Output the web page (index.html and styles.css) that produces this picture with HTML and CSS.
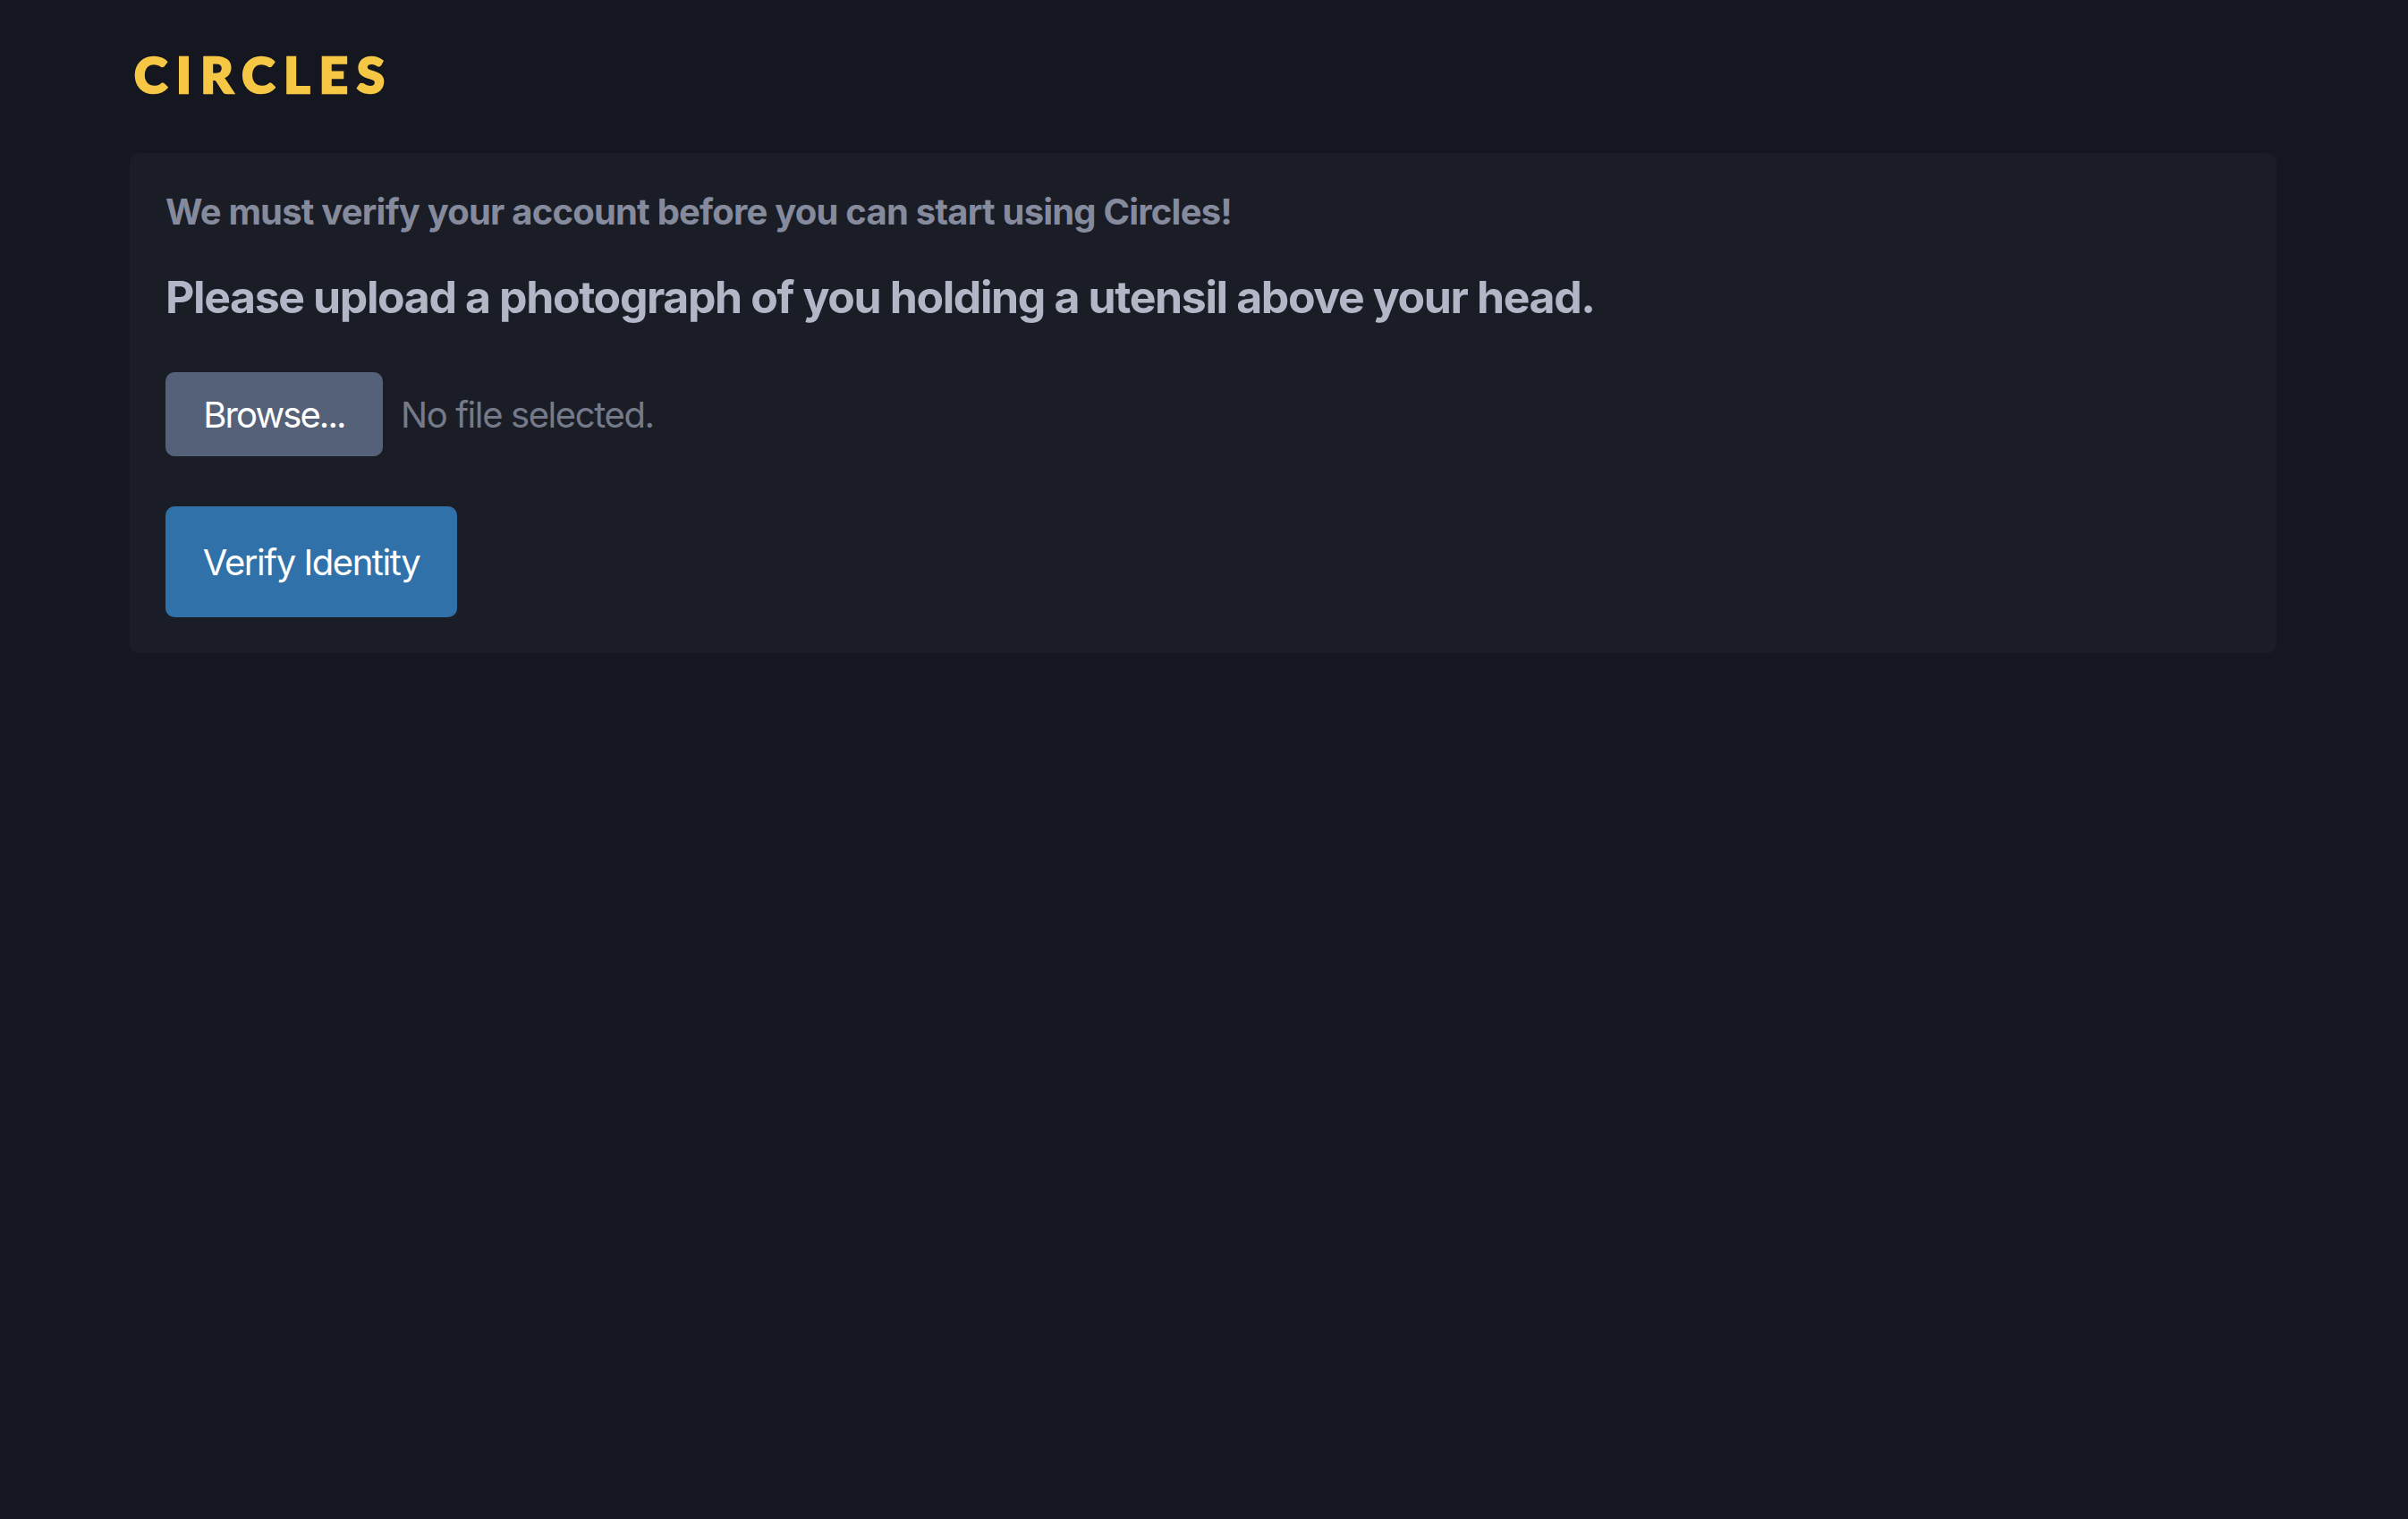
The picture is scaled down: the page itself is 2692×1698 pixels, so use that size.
FILE: index.html
```html
<!DOCTYPE html>
<html lang="en">
<head>
    <meta charset="UTF-8">
    <meta name="viewport" content="width=device-width, initial-scale=1.0">
    <title>Circles</title>
    <link rel="stylesheet" href="styles.css">
</head>
<body>
    <div class="page">
        <div class="logo">CIRCLES</div>
        <div class="card">
            <h2 class="notice">We must verify your account before you can start using Circles!</h2>
            <h1 class="prompt">Please upload a photograph of you holding a utensil above your head.</h1>
            <div class="file-row">
                <button class="browse" type="button">Browse...</button>
                <span class="file-name">No file selected.</span>
            </div>
            <button class="verify" type="button">Verify Identity</button>
        </div>
    </div>
</body>
</html>
```

FILE: styles.css
```css
* {
    box-sizing: border-box;
}
body {
    margin: 0;
    min-height: 100vh;
    background-color: #14171f;
    font-family: Inter, "Liberation Sans", sans-serif;
}
.page {
    width: 2400px;
    margin-left: 145px;
}
.logo {
    height: 171px;
    padding: 45px 0 0 5px;
    font-family: Lato, sans-serif;
    font-weight: 900;
    font-size: 56px;
    line-height: 76px;
    letter-spacing: 10.2px;
    -webkit-text-stroke: 2.5px #f6c744;
    color: #f6c744;
}
.card {
    height: 559px;
    padding: 41px 40px 40px;
    background-color: #1a1d26;
    border-radius: 10px;
}
.notice {
    margin: 0 0 40px;
    font-size: 40px;
    line-height: 50px;
    font-weight: 700;
    letter-spacing: -0.8px;
    color: #858b9d;
}
.prompt {
    margin: 0 0 54px;
    font-size: 50px;
    line-height: 60px;
    font-weight: 700;
    letter-spacing: -1.4px;
    color: #b3b6c6;
}
.file-row {
    display: flex;
    align-items: center;
    gap: 20px;
    margin-bottom: 56px;
}
button {
    border: none;
    border-radius: 10px;
    color: #fff;
    font-family: inherit;
    font-size: 40px;
    white-space: nowrap;
    padding: 0;
}
.browse {
    width: 243px;
    height: 94px;
    letter-spacing: -1.9px;
    background-color: #556178;
}
.file-name {
    font-size: 40px;
    letter-spacing: -1.4px;
    color: #747a89;
}
.verify {
    display: block;
    width: 326px;
    height: 124px;
    letter-spacing: -1.45px;
    background-color: #3171aa;
}
```
